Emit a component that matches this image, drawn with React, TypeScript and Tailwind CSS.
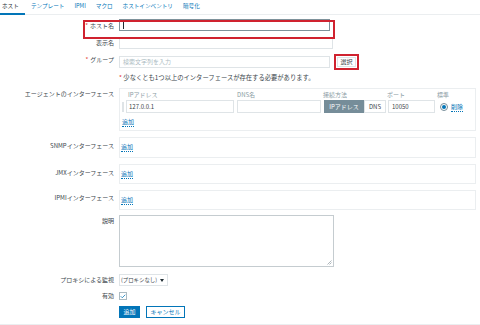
import { Check } from 'lucide-react'

const tabs = ['ホスト', 'テンプレート', 'IPMI', 'マクロ', 'ホストインベントリ', '暗号化']

const Row = ({ label, req, top, labelPt, children }: { label: string; req?: boolean; top: string; labelPt: string; children: React.ReactNode }) => (
  <div className={`flex ${top}`}>
    <div className={`w-[114px] shrink-0 text-right leading-[12px] text-[#3b464c] ${labelPt}`}>
      {req && <span className="text-[#e33734] mr-[2px]">*</span>}
      {label}
    </div>
    <div className="ml-[5px]">{children}</div>
  </div>
)

const AddLink = () => (
  <span className="text-[#0275b8] border-b border-dotted border-[#0275b8] leading-[9px] inline-block">追加</span>
)

const App = () => {
  return (
    <div
      className="w-[480px] h-[325px] bg-white overflow-hidden text-[6px] text-[#3b464c]"
      style={{ fontFamily: '"Noto Sans CJK JP", "Noto Sans", sans-serif' }}
    >
      {/* Tabs */}
      <div className="flex h-[15px] border-b border-[#ebeef0] gap-[10px] text-[5.6px]">
        {tabs.map((t, i) => (
          <div
            key={t}
            className={`h-[15px] leading-[12px] ${i === 0 ? 'w-[25px] pl-[2px] -mr-[4px] text-[#1f2c33] border-b-2 border-[#0275b8]' : 'text-[#0275b8]'}`}
          >
            {t}
          </div>
        ))}
      </div>

      {/* Host name */}
      <div className="relative">
        <div className="absolute left-[83px] top-[1px] w-[252px] h-[19px] border-2 border-[#d0222f]" />
        <Row label="ホスト名" req top="mt-[4px]" labelPt="pt-[1px]">
          <div className="w-[211px] h-[12px] border border-[#7e929b] flex items-center pl-[3px]">
            <div className="w-px h-[7px] bg-[#1f2c33]" />
          </div>
        </Row>
      </div>

      <Row label="表示名" top="mt-[5px]" labelPt="pt-0">
        <div className="w-[214px] h-[12px] border border-[#dfe4e7]" />
      </Row>

      <Row label="グループ" req top="mt-[5px]" labelPt="pt-0">
        <div className="flex items-center">
          <div className="w-[211px] h-[12px] border border-[#dfe4e7] leading-[10px] pl-[3px] text-[#acbbc2]">
            検索文字列を入力
          </div>
          <div className="relative ml-[4px] w-[25px] h-[16px] border-2 border-[#d0222f] flex items-center justify-center">
            <div className="w-[19px] h-[10px] border border-[#dfe4e7] text-center leading-[8px]">選択</div>
          </div>
        </div>
      </Row>

      <div className="mt-[3px] pl-[119px] leading-[9px] text-[6.3px] whitespace-nowrap">
        <span className="text-[#e33734]">*</span> 少なくとも1つ以上のインターフェースが存在する必要があります。
      </div>

      {/* Agent interface */}
      <Row label="エージェントのインターフェース" top="mt-[6px]" labelPt="pt-0">
        <div className="w-[357px] h-[43px] border border-[#ebeef0] pl-[2px] pt-[1px]">
          <div className="flex leading-[10px] text-[#8a9ba3]">
            <div className="w-[114px] pl-[6px]">IPアドレス</div>
            <div className="w-[86px] pl-[1px]">DNS名</div>
            <div className="w-[64px] pl-[1px]">接続方法</div>
            <div className="w-[51px] pl-[1px]">ポート</div>
            <div>標準</div>
          </div>
          <div className="flex items-center h-[13px]">
            <div className="w-[2px] h-[10px] border-l border-r border-[#dfe4e7] mr-[2px]" />
            <div className="w-[108px] h-[13px] border border-[#dfe4e7] leading-[11px] pl-[2px]">127.0.0.1</div>
            <div className="w-[84px] h-[13px] border border-[#dfe4e7] ml-[3px]" />
            <div className="flex ml-[3px] h-[13px]">
              <div className="w-[40px] bg-[#768d99] text-white text-center leading-[13px]">IPアドレス</div>
              <div className="w-[22px] border border-[#dfe4e7] text-center leading-[11px]">DNS</div>
            </div>
            <div className="w-[47px] h-[13px] border border-[#dfe4e7] ml-[2px] leading-[11px] pl-[3px]">10050</div>
            <div className="ml-[5px] w-[8px] h-[8px] rounded-full border border-[#768d99] flex items-center justify-center">
              <div className="w-[4px] h-[4px] rounded-full bg-[#0275b8]" />
            </div>
            <span className="ml-[3px] text-[#0275b8] border-b border-dotted border-[#0275b8] leading-[9px]">削除</span>
          </div>
          <div className="mt-[4px]">
            <AddLink />
          </div>
        </div>
      </Row>

      <Row label="SNMPインターフェース" top="mt-[6px]" labelPt="pt-[3px]">
        <div className="w-[357px] h-[21px] border border-[#ebeef0] pl-[1px] pt-[4px]">
          <AddLink />
        </div>
      </Row>

      <Row label="JMXインターフェース" top="mt-[6px]" labelPt="pt-[3px]">
        <div className="w-[357px] h-[20px] border border-[#ebeef0] pl-[1px] pt-[4px]">
          <AddLink />
        </div>
      </Row>

      <Row label="IPMIインターフェース" top="mt-[6px]" labelPt="pt-[2px]">
        <div className="w-[357px] h-[20px] border border-[#ebeef0] pl-[1px] pt-[4px]">
          <AddLink />
        </div>
      </Row>

      <Row label="説明" top="mt-[5px]" labelPt="pt-0">
        <div className="relative w-[215px] h-[52px] border border-[#c5ccd0]">
          <svg className="absolute right-[1px] bottom-[1px]" width="5" height="5" viewBox="0 0 5 5">
            <path d="M4.5 0.5 L0.5 4.5 M4.5 2.5 L2.5 4.5" stroke="#9aa5ab" strokeWidth="0.8" />
          </svg>
        </div>
      </Row>

      <Row label="プロキシによる監視" top="mt-[7px]" labelPt="pt-0">
        <div className="w-[49px] h-[12px] border border-[#dfe4e7] flex items-center gap-[3px] pl-[1px] whitespace-nowrap">
          <span className="leading-[10px] text-[5.4px]">(プロキシなし)</span>
          <svg width="4" height="3" viewBox="0 0 4 3" className="shrink-0">
            <path d="M0 0 H4 L2 3 Z" fill="#1f2c33" />
          </svg>
        </div>
      </Row>

      <Row label="有効" top="mt-[4px]" labelPt="pt-0">
        <div className="w-[8px] h-[8px] border border-[#acbbc2] flex items-center justify-center mt-[2px]">
          <Check size={7} strokeWidth={3} className="text-[#0275b8]" />
        </div>
      </Row>

      <div className="flex pl-[119px] mt-[4px] gap-[6px]">
        <div className="w-[21px] h-[12px] bg-[#0275b8] text-white text-center leading-[12px]">追加</div>
        <div className="w-[39px] h-[12px] border border-[#0275b8] text-[#0275b8] text-center leading-[10px]">キャンセル</div>
      </div>

      <div className="mt-[6px] border-b border-[#ebeef0]" />
    </div>
  )
}

export default App
